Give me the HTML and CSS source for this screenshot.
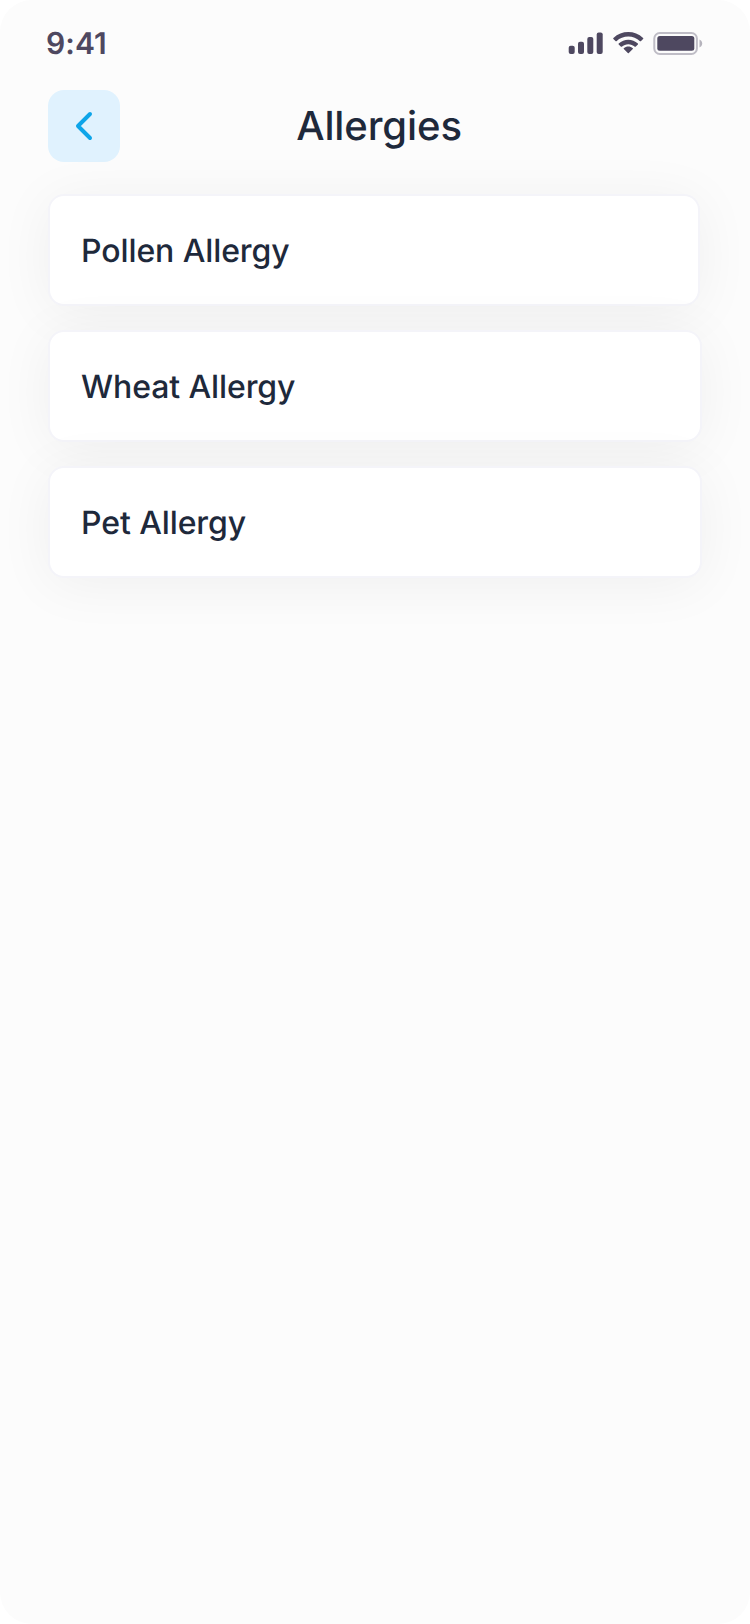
FILE: index.html
```html
<!DOCTYPE html>
<html lang="en">
<head>
<meta charset="utf-8">
<title>Allergies</title>
<link rel="stylesheet" href="styles.css">
</head>
<body>
<div class="screen">
  <div class="status">
    <span class="time">9:41</span>
    <svg class="indicators" width="136" height="24" viewBox="0 0 136 24" fill="#4e4860">
      <rect x="0.7" y="13.7" width="6" height="8.3" rx="2"/>
      <rect x="10" y="9.7" width="6" height="12.3" rx="2"/>
      <rect x="19.3" y="5" width="6" height="17" rx="2"/>
      <rect x="28.7" y="0.5" width="6" height="21.5" rx="2"/>
      <path d="M60.3 4.6c4.4 0 8.6 1.7 11.7 4.6.2.2.6.2.8 0l2.3-2.3c.3-.3.3-.6 0-.9-8.3-7.9-21.400-7.900-29.700 0-.3.3-.3.6 0 .9l2.300 2.300c.2.200.6.200.8 0 3.200-3 7.400-4.600 11.800-4.600z"/>
      <path d="M60.300 12.200c2.400 0 4.700.9 6.500 2.500.2.200.6.200.8 0l2.300-2.300c.3-.3.3-.7 0-.9-5.400-5.100-13.800-5.100-19.200 0-.3.2-.3.600 0 .9l2.300 2.300c.2.200.6.200.8 0 1.800-1.600 4.100-2.500 6.500-2.500z"/>
      <path d="M64.800 17.100c.3-.3.3-.7 0-.9-2.600-2.200-6.400-2.200-9 0-.3.2-.3.600 0 .9l4 4c.3.300.7.300 1 0z"/>
      <rect x="86.300" y="1" width="42.600" height="21" rx="5.500" fill="none" stroke="#4e4860" stroke-opacity=".35" stroke-width="2"/>
      <rect x="89.300" y="4" width="37" height="14.700" rx="2.500"/>
      <path d="M131.500 7.500v8c1.600-.7 2.700-2.200 2.700-4s-1.100-3.300-2.700-4z" fill-opacity=".4"/>
    </svg>
  </div>
  <header class="header">
    <button class="back" aria-label="Back">
      <svg width="72" height="72" viewBox="0 0 72 72" fill="none" stroke="#0ea5e9" stroke-width="4" stroke-linecap="round" stroke-linejoin="round"><path d="M42 24 30 36l12 12"/></svg>
    </button>
    <h1 class="title">Allergies</h1>
  </header>
  <main class="list">
    <div class="card card-narrow">Pollen Allergy</div>
    <div class="card">Wheat Allergy</div>
    <div class="card">Pet Allergy</div>
  </main>
</div>
</body>
</html>
```
FILE: styles.css
```css
* { box-sizing: border-box; }
body {
  margin: 0;
  background: #fff;
  font-family: Inter, "Liberation Sans", sans-serif;
  text-rendering: geometricPrecision;
}
.screen {
  width: 750px;
  height: 1624px;
  overflow: hidden;
  border-radius: 32px;
  background: #fcfcfc;
}
.status {
  height: 90px;
  padding: 24px 46px 0 46px;
  display: flex;
  justify-content: space-between;
}
.time {
  padding-top: 1px;
  font-size: 30px;
  line-height: 38px;
  font-weight: 600;
  letter-spacing: .1px;
  color: #4e4860;
}
.indicators { margin-top: 8px; }
.header {
  height: 72px;
  padding: 0 48px;
  display: grid;
  grid-template-columns: 72px 1fr 64px;
  align-items: center;
}
.back {
  width: 72px;
  height: 72px;
  padding: 0;
  border: 0;
  border-radius: 16px;
  background: #e0f2fe;
}
.back svg { display: block; }
.title {
  margin: 0;
  text-align: center;
  font-size: 40px;
  line-height: 48px;
  font-weight: 500;
  letter-spacing: -.1px;
  color: #1e293b;
}
.list {
  display: flex;
  flex-direction: column;
  gap: 24px;
  padding: 32px 48px 0;
}
.card {
  width: 654px;
  height: 112px;
  padding: 2px 31px 0;
  display: flex;
  align-items: center;
  border: 2px solid #f4f4f9;
  border-radius: 16px;
  background: #fff;
  box-shadow: 0 6px 56px rgba(0, 0, 0, .055);
  font-size: 32px;
  line-height: 40px;
  font-weight: 500;
  letter-spacing: -.1px;
  color: #1e293b;
}
.card-narrow { width: 652px; }
```
